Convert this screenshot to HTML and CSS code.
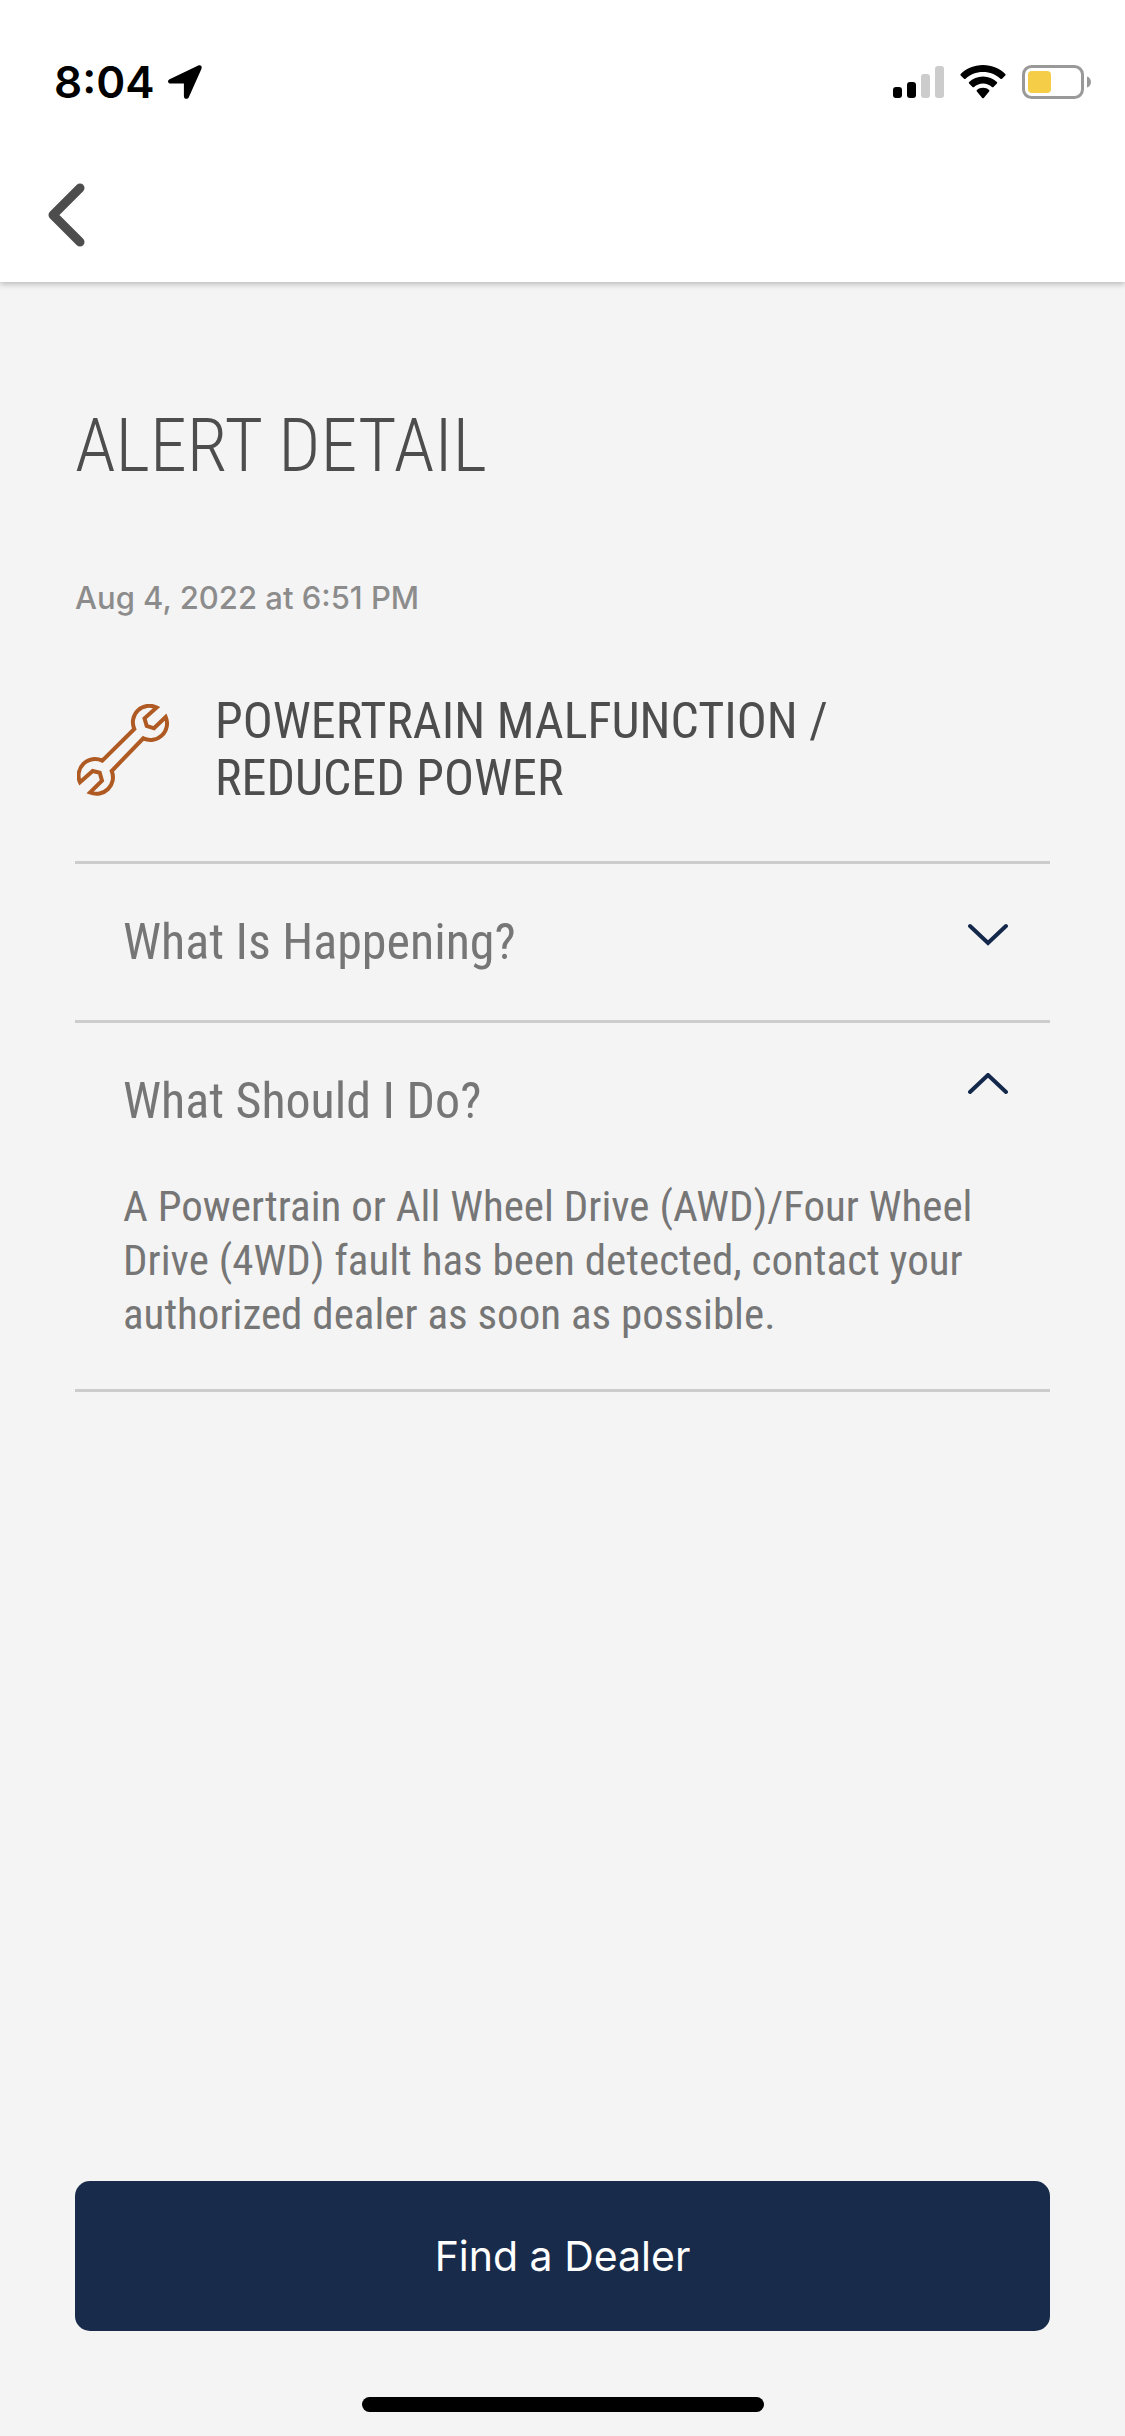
FILE: index.html
```html
<!DOCTYPE html>
<html lang="en">
<head>
    <meta charset="UTF-8">
    <meta name="viewport" content="width=device-width, initial-scale=1.0">
    <title>Alert Detail</title>
    <link rel="stylesheet" href="styles.css">
</head>
<body>
    <div class="screen">
        <header class="top-bar">
            <div class="status-bar">
                <div class="status-left">
                    <span class="time">8:04</span>
                    <svg class="location-icon" viewBox="0 0 34 34" aria-hidden="true">
                        <path d="M1.6 14.2 30.3.6C32.6-.3 34.3 1.4 33.5 3.7L20.8 32.2C19.7 34.7 15.9 34.4 15.9 31.2V18.6H2.8C-.3 18.6-.9 15.4 1.6 14.2Z"/>
                    </svg>
                </div>
                <div class="status-right">
                    <svg class="signal-icon" viewBox="0 0 51 32" aria-hidden="true">
                        <rect x="0" y="21" width="9" height="11" rx="3"/>
                        <rect x="14" y="16" width="9" height="16" rx="3"/>
                        <rect class="signal-off" x="28" y="8" width="9" height="24" rx="3"/>
                        <rect class="signal-off" x="42" y="0" width="9" height="32" rx="3"/>
                    </svg>
                    <svg class="wifi-icon" viewBox="0 0 46 34" aria-hidden="true">
                        <path d="M23 0C32 0 40 3.5 45.3 9Q46 9.7 45.3 10.5L42 13.7Q41.2 14.4 40.4 13.7C36 9.5 30 7 23 7S10 9.5 5.6 13.7Q4.8 14.4 4 13.7L.7 10.5Q0 9.7.7 9C6 3.5 14 0 23 0Z"/>
                        <path d="M23 11.5C28.5 11.5 33.3 13.6 36.9 17Q37.7 17.8 36.9 18.6L33.5 22Q32.7 22.7 31.9 22C29.5 19.9 26.4 18.6 23 18.6S16.5 19.9 14.1 22Q13.3 22.7 12.5 22L9.1 18.6Q8.3 17.8 9.1 17C12.7 13.6 17.5 11.5 23 11.5Z"/>
                        <path d="M23 22.8C25.5 22.8 27.5 23.7 29.1 25Q29.9 25.8 29.1 26.6L23.8 32.9Q23 33.7 22.2 32.9L16.9 26.6Q16.1 25.8 16.9 25C18.5 23.7 20.5 22.8 23 22.8Z"/>
                    </svg>
                    <svg class="battery-icon" viewBox="0 0 69 34" aria-hidden="true">
                        <rect class="battery-shell" x="1.5" y="1.5" width="59" height="31" rx="8"/>
                        <rect class="battery-level" x="6" y="6" width="23" height="22" rx="4"/>
                        <path class="battery-tip" d="M65 11.5C70.3 13 70.3 21 65 22.5Z"/>
                    </svg>
                </div>
            </div>
            <nav class="nav-bar">
                <a class="back-link" href="#" aria-label="Back">
                    <svg class="back-icon" viewBox="0 0 38 64" aria-hidden="true">
                        <path d="M32 5 5 32 32 59"/>
                    </svg>
                </a>
            </nav>
        </header>

        <main class="content">
            <h1 class="page-title">ALERT DETAIL</h1>
            <p class="alert-date">Aug 4, 2022 at 6:51 PM</p>

            <div class="alert-heading">
                <svg class="wrench-icon" viewBox="0 0 92 92" aria-hidden="true">
                    <path d="M79.7 3.5A16.5 16.5 0 0 0 57.3 25L25.3 56.7A16.5 16.5 0 0 0 3 78.3L15.7 67 22.7 68.7 25 76.7 13 88.5A16.5 16.5 0 0 0 34.7 67L66.3 34.3A16.5 16.5 0 0 0 88.7 13L77 24.3 69.7 22 67.5 14.3Z"/>
                </svg>
                <h2 class="alert-name">POWERTRAIN MALFUNCTION / REDUCED POWER</h2>
            </div>

            <section class="accordion">
                <div class="accordion-item">
                    <button class="accordion-header" type="button" aria-expanded="false">
                        <span>What Is Happening?</span>
                        <svg class="chevron" viewBox="0 0 40 24" aria-hidden="true">
                            <path d="M2 4 20 21 38 4"/>
                        </svg>
                    </button>
                </div>
                <div class="accordion-item">
                    <button class="accordion-header" type="button" aria-expanded="true" aria-controls="what-to-do">
                        <span>What Should I Do?</span>
                        <svg class="chevron chevron-up" viewBox="0 0 40 24" aria-hidden="true">
                            <path d="M2 19 20 2 38 19"/>
                        </svg>
                    </button>
                    <p class="accordion-text" id="what-to-do">A Powertrain or All Wheel Drive (AWD)/Four Wheel Drive (4WD) fault has been detected, contact your authorized dealer as soon as possible.</p>
                </div>
            </section>
        </main>

        <footer class="bottom-bar">
            <button class="dealer-button" type="button">Find a Dealer</button>
            <div class="home-indicator"></div>
        </footer>
    </div>
</body>
</html>
```

FILE: styles.css
```css
* {
    margin: 0;
    padding: 0;
    box-sizing: border-box;
}

body {
    background-color: #f4f4f4;
    color: #4d4d4d;
    font-family: 'Roboto Condensed', 'Liberation Sans Narrow', 'Roboto', sans-serif;
}

button {
    border: none;
    background: none;
    font-family: inherit;
    cursor: pointer;
}

svg {
    display: block;
    flex-shrink: 0;
}

.screen {
    display: flex;
    flex-direction: column;
    min-height: 100vh;
}

/* Status bar and navigation */
.top-bar {
    background-color: #fff;
    box-shadow: 0 2px 6px rgba(0, 0, 0, 0.25);
}

.status-bar {
    display: flex;
    justify-content: space-between;
    align-items: center;
    padding: 55px 34px 0 54px;
    color: #000;
}

.status-left {
    display: flex;
    align-items: center;
    gap: 13px;
}

.status-right {
    display: flex;
    align-items: center;
    gap: 16px;
}

.time {
    font-family: 'Inter', sans-serif;
    font-size: 44px;
    font-weight: 600;
    line-height: 54px;
}

.location-icon {
    width: 34px;
    height: 34px;
}

.signal-icon {
    width: 51px;
    height: 32px;
}

.signal-off {
    fill: #ccc;
}

.wifi-icon {
    width: 46px;
    height: 34px;
}

.battery-icon {
    width: 69px;
    height: 34px;
}

.battery-shell {
    fill: none;
    stroke: #999;
    stroke-width: 3;
}

.battery-level {
    fill: #f5cd46;
}

.battery-tip {
    fill: #999;
}

.nav-bar {
    padding: 74px 48px 35px;
}

.back-link {
    display: inline-block;
    vertical-align: top;
}

.back-icon {
    width: 38px;
    height: 64px;
    fill: none;
    stroke: #4d4d4d;
    stroke-width: 9;
    stroke-linecap: round;
    stroke-linejoin: round;
}

/* Alert content */
.content {
    flex: 1;
    padding: 120px 75px 0;
}

.page-title {
    font-size: 74px;
    font-weight: 300;
    line-height: 88px;
}

.alert-date {
    margin-top: 90px;
    color: #8c8c8c;
    font-family: 'Inter', sans-serif;
    font-size: 31px;
    font-weight: 500;
    line-height: 36px;
}

.alert-heading {
    display: flex;
    align-items: center;
    gap: 46px;
    padding: 77px 150px 54px 2px;
}

.wrench-icon {
    width: 92px;
    height: 92px;
    fill: none;
    stroke: #ae5a22;
    stroke-width: 4;
}

.alert-name {
    font-size: 50px;
    font-weight: 400;
    line-height: 57px;
}

/* Accordion */
.accordion {
    border-top: 3px solid #ccc;
    color: #767676;
}

.accordion-item {
    border-bottom: 3px solid #ccc;
}

.accordion-header {
    display: flex;
    justify-content: space-between;
    width: 100%;
    padding: 50px 42px 50px 48px;
    color: inherit;
    font-size: 50px;
    line-height: 56px;
    text-align: left;
}

.chevron {
    width: 40px;
    height: 24px;
    margin-top: 8px;
    fill: none;
    stroke: #14284b;
    stroke-width: 4;
    stroke-linecap: round;
}

.chevron-up {
    margin-top: 0;
}

.accordion-text {
    padding: 0 48px 48px;
    font-size: 43px;
    line-height: 54px;
}

/* Bottom action */
.bottom-bar {
    padding: 0 75px 24px;
}

.dealer-button {
    width: 100%;
    padding: 49px;
    border-radius: 15px;
    background-color: #182b4b;
    color: #fff;
    font-family: 'Inter', sans-serif;
    font-size: 41px;
    line-height: 52px;
}

.home-indicator {
    width: 402px;
    height: 15px;
    margin: 66px auto 0;
    border-radius: 8px;
    background-color: #000;
}
```
